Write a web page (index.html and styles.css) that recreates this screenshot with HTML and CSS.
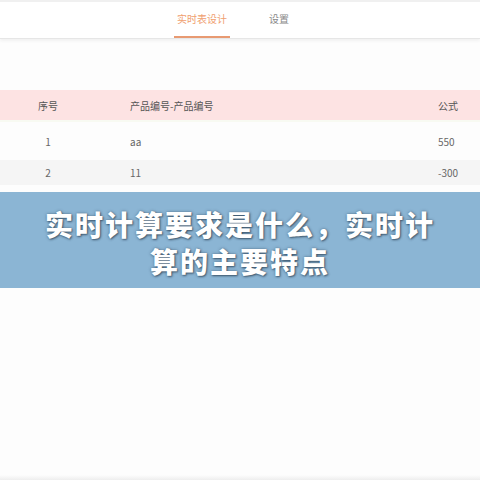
FILE: index.html
```html
<!DOCTYPE html>
<html lang="zh-CN">
<head>
  <meta charset="UTF-8" />
  <meta name="viewport" content="width=device-width, initial-scale=1.0" />
  <title>实时表设计</title>
  <link rel="stylesheet" href="styles.css">
</head>
<body>
  <div class="topbar">
    <div class="tabs">
      <span class="tab active">实时表设计</span>
      <span class="tab">设置</span>
    </div>
  </div>

  <div class="content">
    <table class="grid">
      <thead>
        <tr><th class="c-no">序号</th><th class="c-code">产品编号-产品编号</th><th class="c-val">公式</th></tr>
      </thead>
      <tbody>
        <tr><td class="c-no">1</td><td class="c-code">aa</td><td class="c-val">550</td></tr>
        <tr class="alt"><td class="c-no">2</td><td class="c-code">11</td><td class="c-val">-300</td></tr>
      </tbody>
    </table>
  </div>

  <div class="banner">
    <h1>实时计算要求是什么，实时计<br>算的主要特点</h1>
  </div>

  <div class="footer"></div>
</body>
</html>
```

FILE: styles.css
```css
body { margin: 0; font-family: "Noto Sans CJK SC", "Noto Sans", sans-serif; background: #fdfdfd; height: 480px; display: flex; flex-direction: column; }
.topbar { border-top: 2px solid #f0f0f0; height: 36px; background: #fff; border-bottom: 1px solid #e6e6e6; box-shadow: 0 2px 3px rgba(0,0,0,0.05); }
.tabs { display: flex; justify-content: center; gap: 36px; padding-right: 14px; }
.tab { font-size: 10px; color: #888; height: 34px; line-height: 34px; padding: 0 3px; }
.tab.active { color: #f0a070; border-bottom: 2px solid #e89a72; }
.content { padding-top: 51px; }
.grid { width: 100%; border-collapse: collapse; font-size: 10px; color: #666; }
.grid th, .grid td { padding: 0; }
.grid th { background: #fde3e3; font-weight: normal; height: 30px; color: #555; border-bottom: 2px solid #f8faf2; }
.grid td { height: 38px; }
.grid tr.alt td { background: #f5f5f5; height: 25px; }
.grid .c-no { width: 96px; text-align: center; }
.grid .c-code { text-align: left; padding-left: 34px; }
.grid .c-val { text-align: left; width: 42px; }
.banner { margin-top: 7px; height: 96px; background: #8bb5d4; display: flex; align-items: center; justify-content: center; }
.banner h1 { margin: 0; padding-top: 6px; font-size: 28px; line-height: 37px; font-weight: 900; color: #fff; text-align: center; letter-spacing: 2px; text-shadow: 1px 1px 2px rgba(40,60,80,0.7), 0 0 3px rgba(40,60,80,0.5); }
.footer { margin-top: auto; height: 5px; background: linear-gradient(#fdfdfd, #eeeeee); }
```
